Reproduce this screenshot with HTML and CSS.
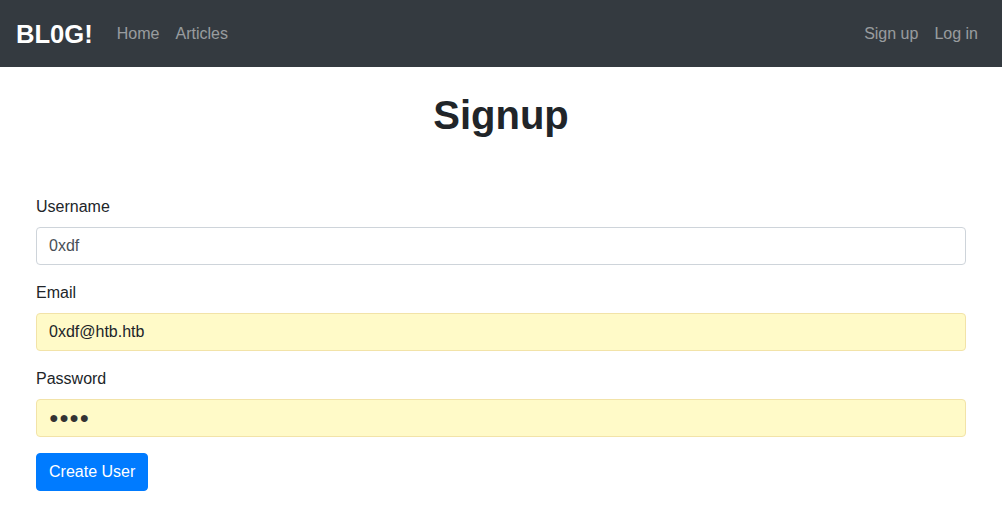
FILE: index.html
```html
<!DOCTYPE html>
<html lang="en">
<head>
<meta charset="utf-8">
<title>Signup</title>
<link rel="stylesheet" href="styles.css">
</head>
<body>
<nav class="navbar">
  <div class="nav-left">
    <a class="brand" href="#">BL0G!</a>
    <a class="nav-link" href="#">Home</a>
    <a class="nav-link" href="#">Articles</a>
  </div>
  <div class="nav-right">
    <a class="nav-link" href="#">Sign up</a>
    <a class="nav-link" href="#">Log in</a>
  </div>
</nav>
<main class="container">
  <h1 class="title">Signup</h1>
  <form class="form">
    <div class="form-group">
      <label class="label" for="u">Username</label>
      <input class="input" id="u" type="text" value="0xdf">
    </div>
    <div class="form-group">
      <label class="label" for="e">Email</label>
      <input class="input autofill" id="e" type="text" value="0xdf@htb.htb">
    </div>
    <div class="form-group">
      <label class="label" for="p">Password</label>
      <div class="input autofill dots">&#9679;&#9679;&#9679;&#9679;</div>
    </div>
    <button class="btn" type="button">Create User</button>
  </form>
</main>
</body>
</html>
```
FILE: styles.css
```css
* { box-sizing: border-box; }
html, body { margin: 0; padding: 0; }
body {
  font-family: "Liberation Sans", Arial, sans-serif;
  font-size: 16px;
  line-height: 1.5;
  color: #212529;
  background: #fff;
}
.navbar {
  height: 67px;
  background: #343a40;
  display: flex;
  align-items: center;
  justify-content: space-between;
  padding: 0 16px;
}
.nav-left, .nav-right { display: flex; align-items: center; }
.brand {
  font-size: 25.6px;
  font-weight: 700;
  color: #fff;
  text-decoration: none;
  margin-right: 16px;
  line-height: 38px;
}
.nav-link {
  color: rgba(255,255,255,.5);
  text-decoration: none;
  padding: 0 8px;
  font-size: 16px;
  line-height: 24px;
}
.container {
  max-width: 960px;
  margin: 0 auto;
  padding: 0 15px;
}
.title {
  margin: 24px 0 56px;
  font-size: 40px;
  line-height: 1.2;
  font-weight: 700;
  text-align: center;
}
.form-group { margin-bottom: 16px; }
.label {
  display: block;
  margin-bottom: 8px;
}
.input {
  display: block;
  width: 100%;
  height: 38px;
  padding: 6px 12px;
  font-family: inherit;
  font-size: 16px;
  line-height: 1.5;
  color: #495057;
  background: #fff;
  border: 1px solid #ced4da;
  border-radius: 4px;
  outline: none;
}
.autofill {
  background: #fffac8;
  border-color: #f2e3a8;
  color: #212529;
}
.dots {
  font-size: 16px;
  line-height: 24px;
  letter-spacing: 0.5px;
  color: #333;
}
.btn {
  display: inline-block;
  height: 38px;
  padding: 6px 12px;
  font-family: inherit;
  font-size: 16px;
  line-height: 1.5;
  color: #fff;
  background: #007bff;
  border: 1px solid #007bff;
  border-radius: 4px;
}
```
